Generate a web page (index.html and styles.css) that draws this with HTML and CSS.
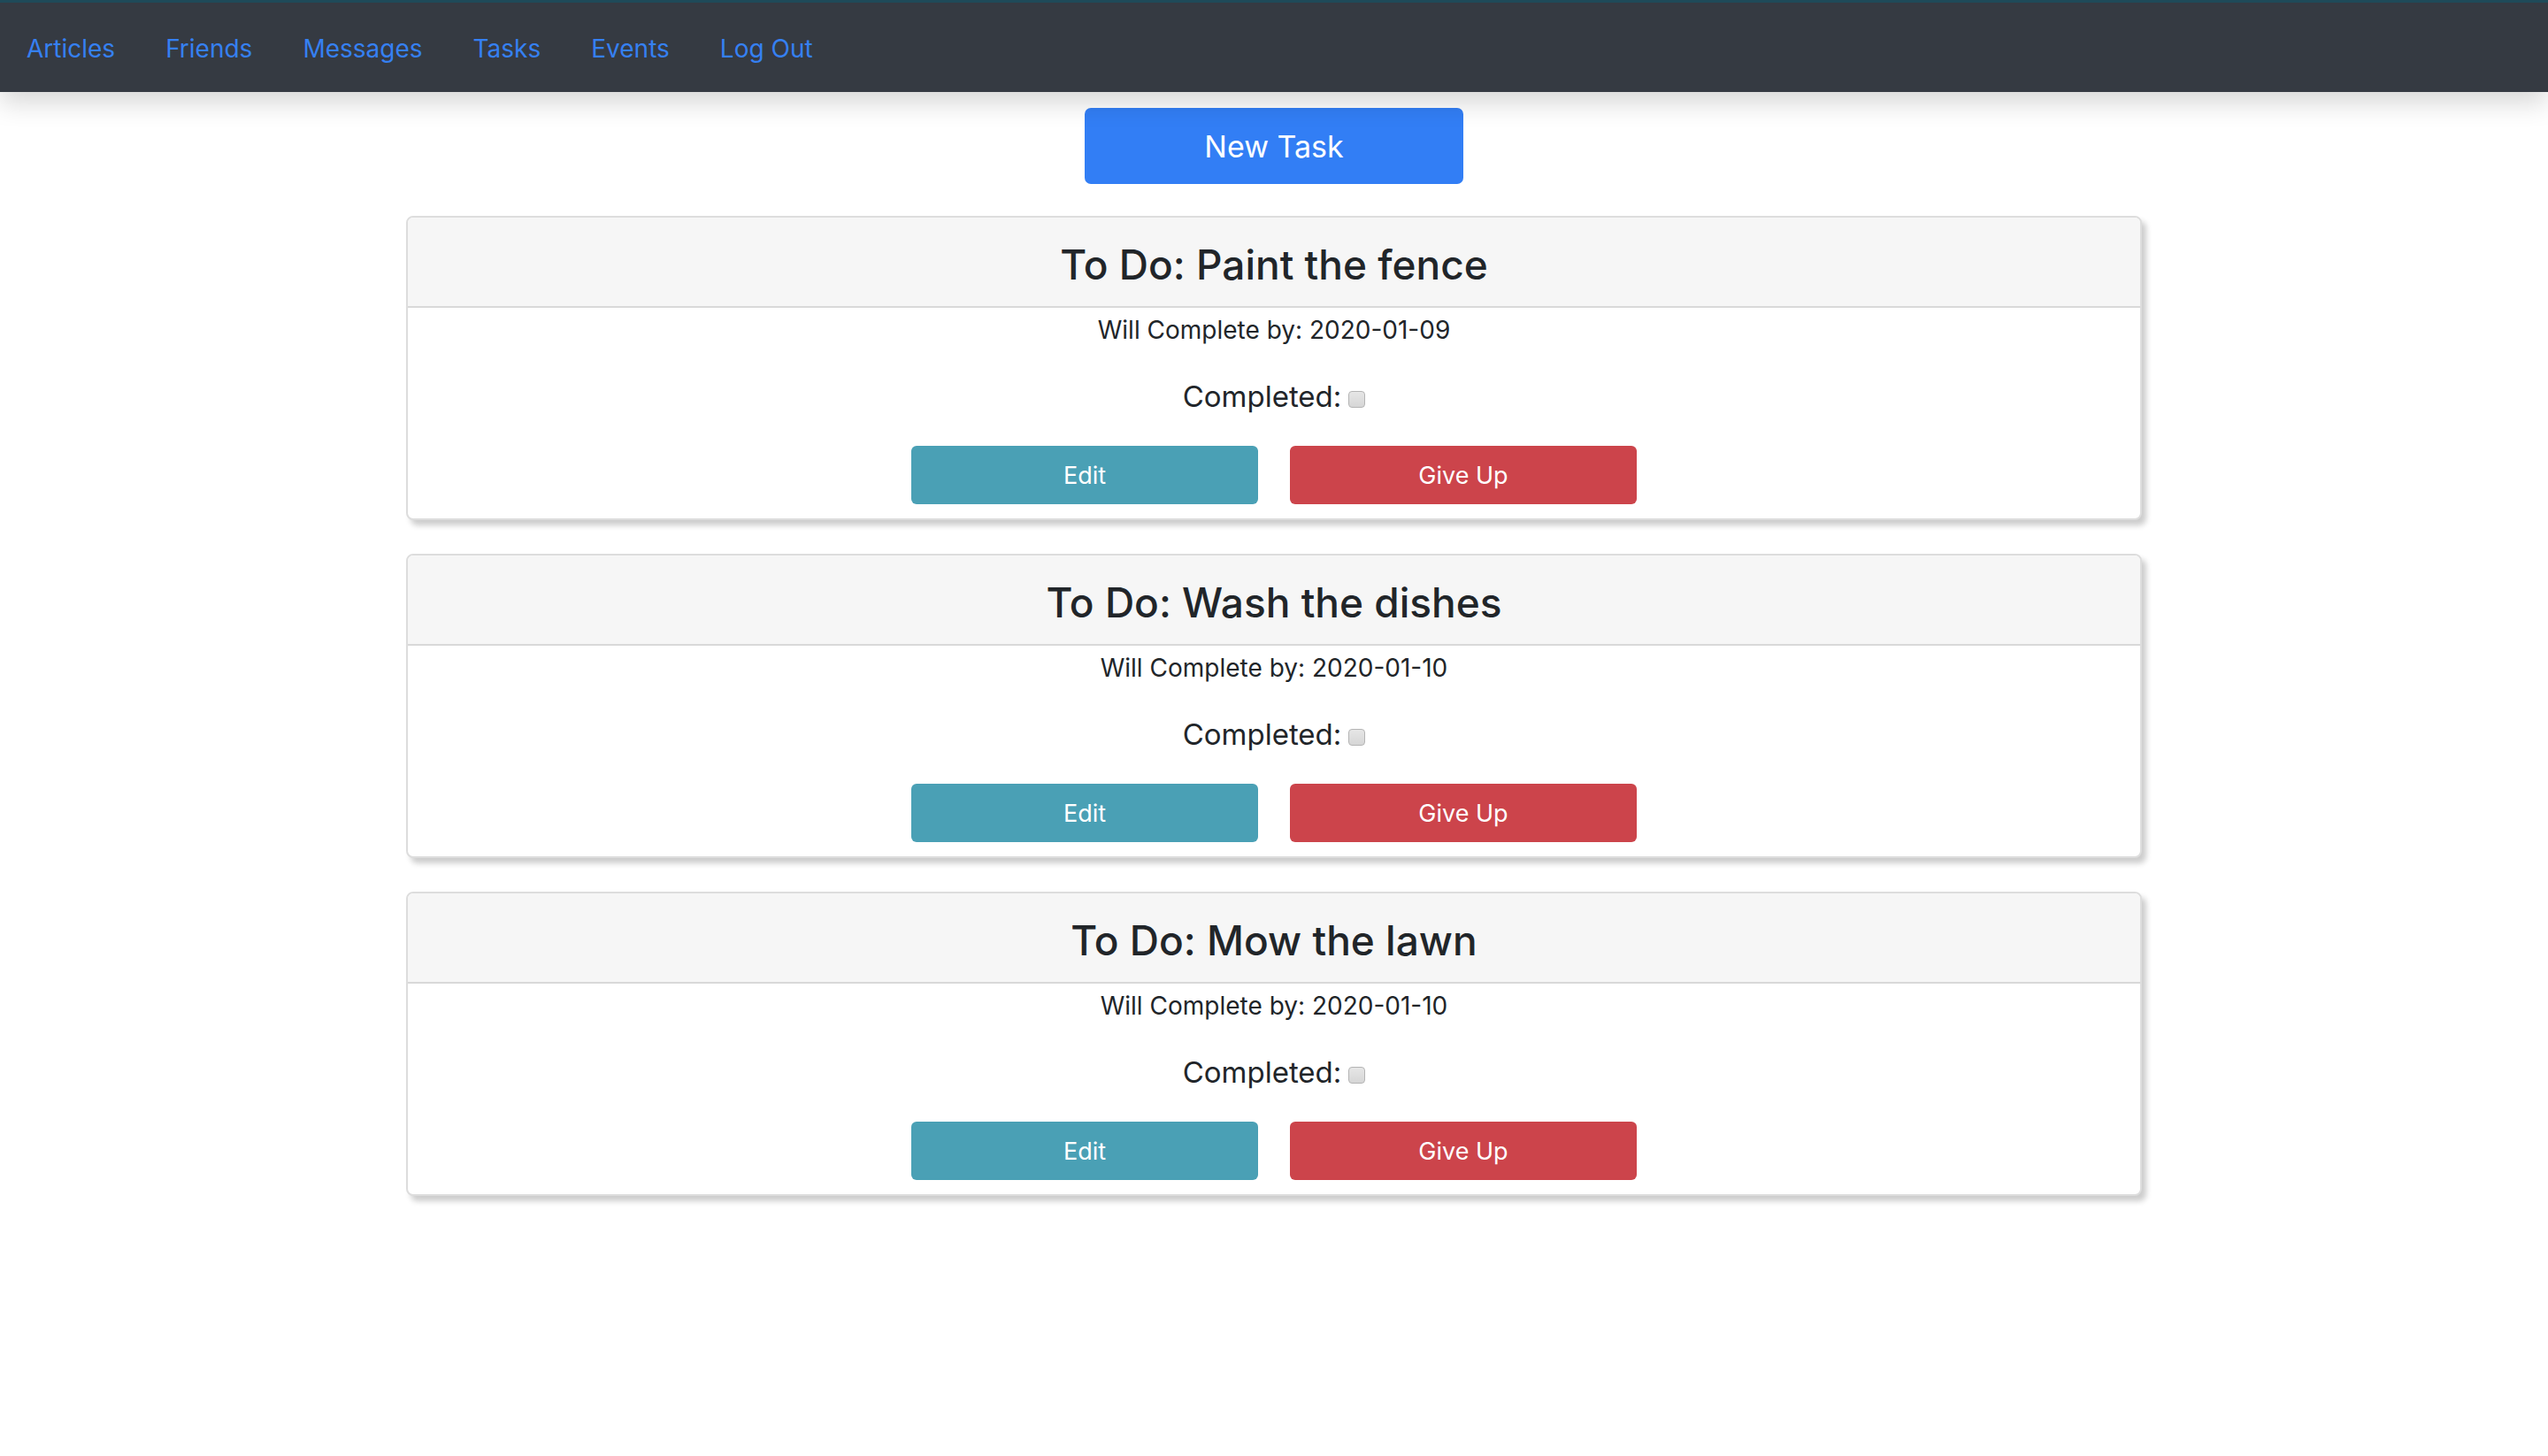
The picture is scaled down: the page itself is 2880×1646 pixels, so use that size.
FILE: index.html
```html
<!DOCTYPE html>
<html lang="en">
<head>
<meta charset="utf-8">
<title>Tasks</title>
<link rel="stylesheet" href="styles.css">
</head>
<body>
<nav class="topnav">
  <a class="nav-link" href="#">Articles</a>
  <a class="nav-link" href="#">Friends</a>
  <a class="nav-link" href="#">Messages</a>
  <a class="nav-link" href="#">Tasks</a>
  <a class="nav-link" href="#">Events</a>
  <a class="nav-link" href="#">Log Out</a>
</nav>
<main class="content">
  <button class="btn btn-new">New Task</button>

  <section class="card">
    <header class="card-header"><h2 class="card-title">To Do: Paint the fence</h2></header>
    <div class="card-body">
      <p class="due">Will Complete by: 2020-01-09</p>
      <label class="completed">Completed: <input type="checkbox" class="check"></label>
      <div class="actions">
        <button class="btn btn-edit">Edit</button>
        <button class="btn btn-giveup">Give Up</button>
      </div>
    </div>
  </section>

  <section class="card">
    <header class="card-header"><h2 class="card-title">To Do: Wash the dishes</h2></header>
    <div class="card-body">
      <p class="due">Will Complete by: 2020-01-10</p>
      <label class="completed">Completed: <input type="checkbox" class="check"></label>
      <div class="actions">
        <button class="btn btn-edit">Edit</button>
        <button class="btn btn-giveup">Give Up</button>
      </div>
    </div>
  </section>

  <section class="card">
    <header class="card-header"><h2 class="card-title">To Do: Mow the lawn</h2></header>
    <div class="card-body">
      <p class="due">Will Complete by: 2020-01-10</p>
      <label class="completed">Completed: <input type="checkbox" class="check"></label>
      <div class="actions">
        <button class="btn btn-edit">Edit</button>
        <button class="btn btn-giveup">Give Up</button>
      </div>
    </div>
  </section>
</main>
</body>
</html>
```

FILE: styles.css
```css
* { box-sizing: border-box; }

html, body {
  margin: 0;
  padding: 0;
  background: #ffffff;
}

body {
  font-family: Inter, "Noto Sans", "Liberation Sans", sans-serif;
  color: #212529;
}

.topnav {
  height: 104px;
  border-top: 3px solid #1f4a59;
  background: #353a42;
  display: flex;
  align-items: center;
  gap: 57px;
  padding-left: 30px;
  box-shadow: 0 12px 28px rgba(0, 0, 0, 0.16);
  position: relative;
  z-index: 1;
}

.nav-link {
  color: #3580f2;
  text-decoration: none;
  font-size: 28px;
  line-height: 36px;
  padding-top: 2px;
}

.content {
  display: flex;
  flex-direction: column;
  align-items: center;
  padding-top: 18px;
}

.btn {
  border: none;
  color: #ffffff;
  font-family: inherit;
  border-radius: 7px;
  cursor: pointer;
  display: flex;
  align-items: center;
  justify-content: center;
  padding: 0;
}

.btn-new {
  width: 428px;
  height: 86px;
  background: #327ef5;
  font-size: 34px;
  margin-bottom: 36px;
}

.card {
  width: 1962px;
  border: 2px solid #dddddd;
  border-radius: 8px;
  background: #ffffff;
  box-shadow: 5px 6px 6px rgba(0, 0, 0, 0.2);
  margin-bottom: 38px;
  overflow: hidden;
}

.card-header {
  background: #f6f6f6;
  border-bottom: 2px solid #d9d9d9;
  padding: 24px 0 18px;
  text-align: center;
}

.card-title {
  margin: 0;
  font-size: 46px;
  line-height: 58px;
  font-weight: 500;
  color: #212529;
}

.card-body {
  display: flex;
  flex-direction: column;
  align-items: center;
  padding: 8px 0 16px;
}

.due {
  margin: 0;
  font-size: 28px;
  line-height: 34px;
}

.completed {
  margin-top: 38px;
  font-size: 33px;
  line-height: 40px;
  display: flex;
  align-items: center;
  gap: 8px;
}

.check {
  appearance: none;
  -webkit-appearance: none;
  width: 19px;
  height: 19px;
  margin: 6px 0 0;
  border: 1.5px solid #b4b4b4;
  border-radius: 4px;
  background: linear-gradient(#e6e6e6, #d6d6d6);
}

.actions {
  margin-top: 36px;
  display: flex;
  gap: 36px;
}

.btn-edit,
.btn-giveup {
  width: 392px;
  height: 66px;
  font-size: 27px;
  border-radius: 6px;
}

.btn-edit { background: #4aa0b5; }
.btn-giveup { background: #cc444b; }
```
